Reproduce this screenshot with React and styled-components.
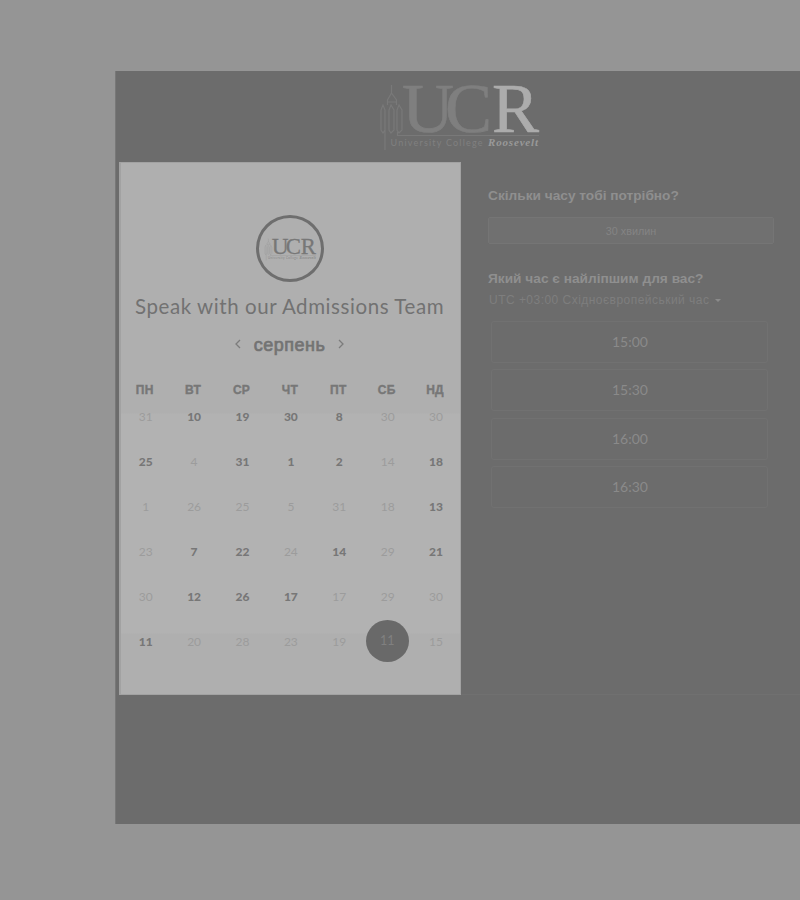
import React from "react";
import styled, { createGlobalStyle } from "styled-components";

const Global = createGlobalStyle`
  * { box-sizing: border-box; }
  body { margin: 0; background: #959595; overflow: hidden; }
`;

const Page = styled.main`
  height: 900px;
  padding: 71px 0 76px 115px;
  overflow: hidden;
  background: #959595;
  font-family: "Liberation Sans", sans-serif;
`;

const Widget = styled.div`
  height: 753px;
  background: #6c6c6c;
  border-left: 1px solid #787878;
`;

const Header = styled.header`
  height: 91px;
  padding: 9px 0 0 262px;
`;

const Body = styled.div`
  display: flex;
  height: 533px;
  padding-left: 3px;
`;

const CalendarPanel = styled.section`
  flex: none;
  width: 342px;
  background: #afafaf;
  border: 1px solid #a2a2a2;
  border-width: 1px 1px 1px 2px;
  display: flex;
  flex-direction: column;
  padding-top: 52px;
`;

const Avatar = styled.div`
  width: 68px;
  height: 67px;
  margin-left: 135px;
  border: 3px solid #6e6e6e;
  border-radius: 50%;
  display: flex;
  align-items: center;
  justify-content: center;
`;

const Title = styled.h1`
  margin: 10px 0 0 14px;
  height: 28px;
  font: 400 20.5px/28px Lato, sans-serif;
  letter-spacing: 0.57px;
  color: #727272;
  white-space: nowrap;
`;

const MonthBar = styled.div`
  display: flex;
  align-items: center;
  justify-content: center;
  gap: 12px;
  height: 24px;
  margin-top: 13px;
  padding-right: 2px;
`;

const Month = styled.h2`
  margin: 0;
  font: 400 18px/24px "Liberation Sans", sans-serif;
  letter-spacing: 0.5px;
  color: #737373;
  -webkit-text-stroke: 0.7px #737373;
`;

const Chevron = styled.svg`
  width: 8px;
  height: 10px;
  margin-bottom: 2px;
  fill: none;
  stroke: #7c7c7c;
  stroke-width: 1.3;
`;

const Week = styled.div`
  display: grid;
  grid-template-columns: repeat(7, 48.4px);
  width: 339px;
`;

const Weekdays = styled(Week)`
  height: 22px;
  margin-top: 22px;
  align-items: center;
`;

const Weekday = styled.span`
  text-align: center;
  padding-right: 1px;
  font: 700 12px/16px "Liberation Sans", sans-serif;
  letter-spacing: 0.2px;
  -webkit-text-stroke: 0.4px #777;
  color: #777;
`;

const Days = styled(Week)`
  grid-template-rows: repeat(6, 45.1px);
  margin-top: -7px;
  background: linear-gradient(transparent 19px, #b2b2b2 20px, #b2b2b2 239px, transparent 240px);
`;

const Day = styled.span`
  display: flex;
  align-items: center;
  justify-content: center;
  padding-left: 1px;
  font: ${(p) => (p.$open ? 900 : 400)} 12px/20px Lato, sans-serif;
  color: ${(p) => (p.$open ? "#777777" : "#9c9c9c")};
`;

const SelectedDay = styled.span`
  width: 43px;
  height: 42px;
  place-self: center;
  margin-top: -2px;
  border-radius: 50%;
  background: #696969;
  color: #808080;
  display: flex;
  align-items: center;
  justify-content: center;
  font: 400 12.5px/20px Lato, sans-serif;
`;

const TimePanel = styled.section`
  flex: 1;
  padding: 24px 26px 0 27px;
  border-bottom: 1px solid #707070;
`;

const Question = styled.h3`
  margin: 0;
  height: 20px;
  font: 700 13.7px/20px "Liberation Sans", sans-serif;
  color: #8f8f8f;
  white-space: nowrap;
`;

const Duration = styled.button`
  display: block;
  width: 286px;
  height: 27px;
  margin: 11px 0 25px;
  padding: 0;
  border: 1px solid #757575;
  border-radius: 2px;
  background: #707070;
  color: #848484;
  font: 400 10.8px/24px "Liberation Sans", sans-serif;
`;

const Zone = styled.div`
  display: flex;
  align-items: center;
  gap: 6px;
  height: 22px;
  padding-left: 1px;
  font: 400 12px/22px "Liberation Sans", sans-serif;
  letter-spacing: 0.47px;
  color: #7e7e7e;
  white-space: nowrap;
`;

const Caret = styled.i`
  border: 3px solid transparent;
  border-top-color: #8b8b8b;
  border-bottom: 0;
`;

const Slots = styled.div`
  display: flex;
  flex-direction: column;
  gap: 6.4px;
  width: 277px;
  margin: 10px 0 0 3px;
`;

const Slot = styled.button`
  height: 42px;
  padding: 0 0 0 1px;
  border: 1px solid #717171;
  border-radius: 3px;
  background: transparent;
  color: #8a8a8a;
  font: 400 14px/38px Lato, sans-serif;
`;

const LogoArt = styled.svg`
  display: block;
  overflow: visible;
`;

function Logo({ width, height, main, accent, tower, caption, weight }) {
  return (
    <LogoArt width={width} height={height} viewBox="0 0 164 72" preserveAspectRatio="none" aria-label="University College Roosevelt">
      <g fill="none" stroke={tower} strokeWidth="1.2">
        <path d="M13.5 5v8M13.5 13l-4 7v5M13.5 13l5 7v5M9.5 22h9M3 30l2-5 2 5v20l-2 3-2-3zM11 30l2-5 3 5v20l-3 3-2-3zM19 30l2-5 3 5v20l-3 3-2-3zM7 50v20" />
        <path d="M19.5 52v3.5H161" />
      </g>
      <g fontFamily="Liberation Serif, serif" fontSize="69" fill={main} stroke={main} strokeWidth={weight}>
        <text x="24" y="52" textLength="52" lengthAdjust="spacingAndGlyphs">U</text>
        <text x="67" y="52" textLength="47" lengthAdjust="spacingAndGlyphs">C</text>
        <text x="114" y="52" textLength="47" lengthAdjust="spacingAndGlyphs" fill={accent} stroke={accent}>R</text>
      </g>
      <text x="12.5" y="66" fontFamily="Lato, sans-serif" fontSize="9" textLength="92" fill={caption}>University College</text>
      <text x="110" y="66" fontFamily="Liberation Serif, serif" fontSize="11" fontStyle="italic" fontWeight="700" textLength="50" fill={accent} opacity=".7">Roosevelt</text>
    </LogoArt>
  );
}

const weekdays = ["ПН", "ВТ", "СР", "ЧТ", "ПТ", "СБ", "НД"];
const open = true;
const days = [
  [31], [10, open], [19, open], [30, open], [8, open], [30], [30],
  [25, open], [4], [31, open], [1, open], [2, open], [14], [18, open],
  [1], [26], [25], [5], [31], [18], [13, open],
  [23], [7, open], [22, open], [24], [14, open], [29], [21, open],
  [30], [12, open], [26, open], [17, open], [17], [29], [30],
  [11, open], [20], [28], [23], [19], [11, false, true], [15],
];

export default function App() {
  return (
    <Page>
      <Global />
      <Widget>
        <Header>
          <Logo width={164} height={72} main="#7f7f7f" accent="#acacac" tower="#797979" caption="#808080" weight={0.6} />
        </Header>
        <Body>
          <CalendarPanel>
            <Avatar>
              <Logo width={53} height={24} main="#777777" accent="#777777" tower="#999999" caption="#858585" weight={0.8} />
            </Avatar>
            <Title>Speak with our Admissions Team</Title>
            <MonthBar>
              <Chevron viewBox="0 0 8 10"><path d="M6 1 2 5l4 4" /></Chevron>
              <Month>серпень</Month>
              <Chevron viewBox="0 0 8 10"><path d="m2 1 4 4-4 4" /></Chevron>
            </MonthBar>
            <Weekdays>
              {weekdays.map((name) => <Weekday key={name}>{name}</Weekday>)}
            </Weekdays>
            <Days>
              {days.map(([day, isOpen, selected], i) =>
                selected ? <SelectedDay key={i}>{day}</SelectedDay> : <Day key={i} $open={isOpen}>{day}</Day>
              )}
            </Days>
          </CalendarPanel>
          <TimePanel>
            <Question>Скільки часу тобі потрібно?</Question>
            <Duration>30 хвилин</Duration>
            <Question>Який час є найліпшим для вас?</Question>
            <Zone>UTC +03:00 Східноєвропейський час <Caret /></Zone>
            <Slots>
              {["15:00", "15:30", "16:00", "16:30"].map((time) => <Slot key={time}>{time}</Slot>)}
            </Slots>
          </TimePanel>
        </Body>
      </Widget>
    </Page>
  );
}
